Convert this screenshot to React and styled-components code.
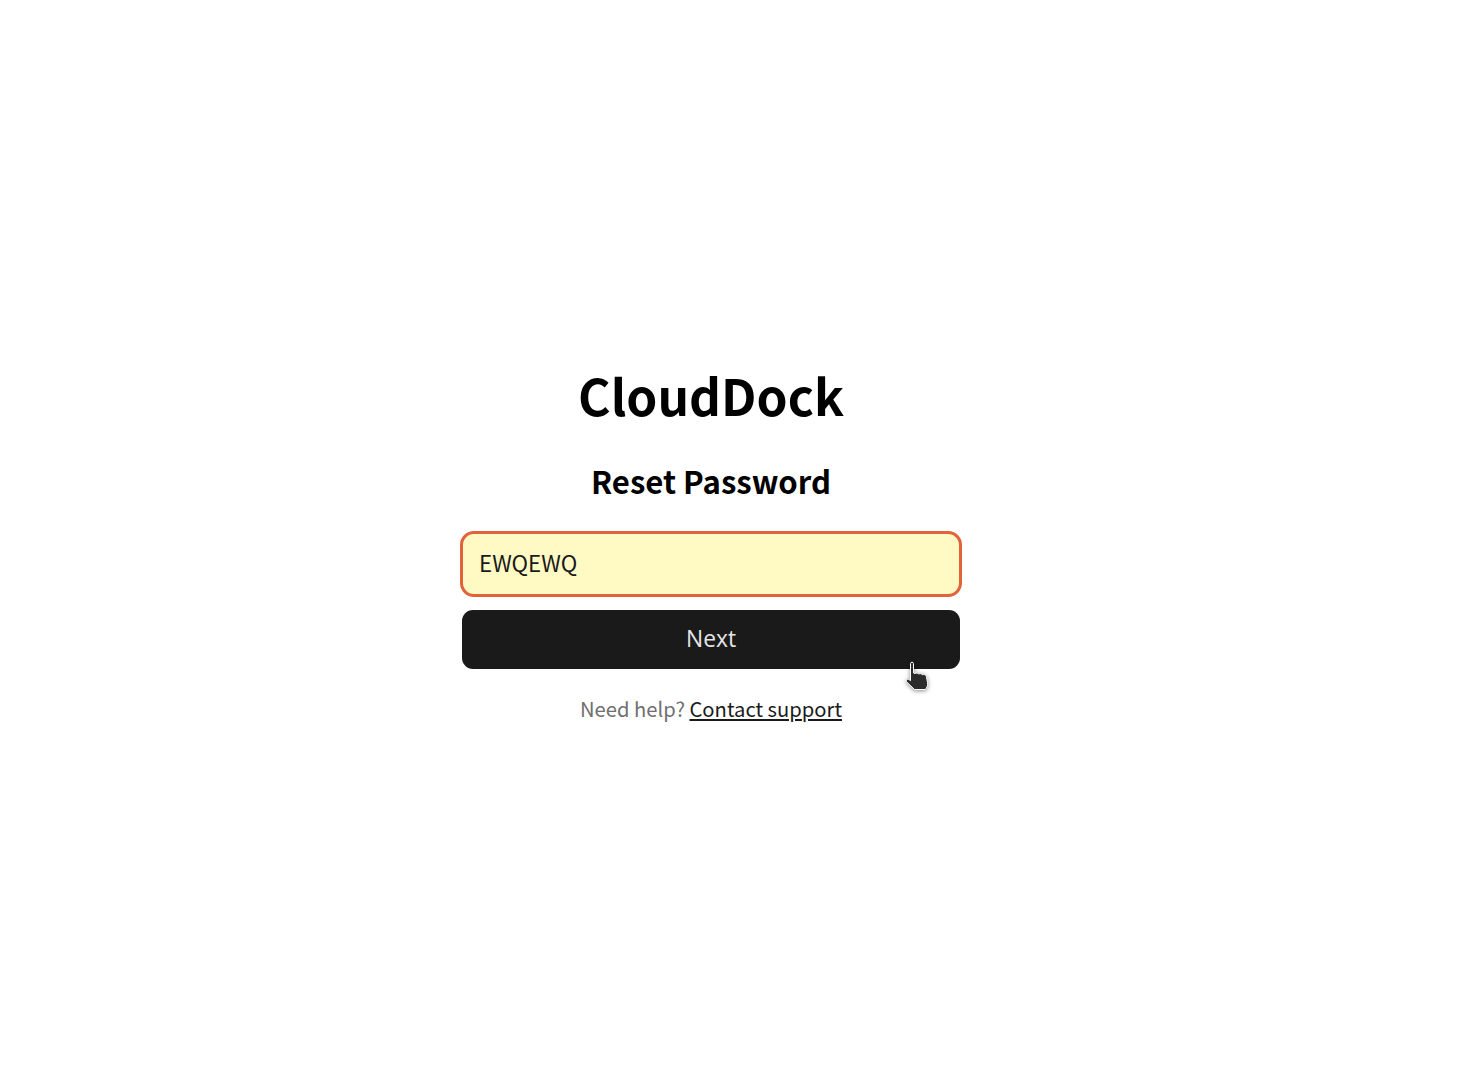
import { createGlobalStyle } from 'styled-components';
import styled from 'styled-components';

const GlobalStyle = createGlobalStyle`
  html, body {
    margin: 0;
    padding: 0;
    background: #fff;
  }
`;

const Page = styled.main`
  box-sizing: border-box;
  width: 1472px;
  height: 1080px;
  padding: 364px 50px 0 0;
  display: flex;
  flex-direction: column;
  align-items: center;
  font-family: 'Noto Sans CJK JP', sans-serif;
`;

const Form = styled.form`
  position: relative;
  width: 502px;
  display: flex;
  flex-direction: column;
  align-items: center;
`;

const Brand = styled.h1`
  margin: 0 0 37px;
  font-size: 49.7px;
  line-height: 60px;
  font-weight: 700;
  color: #000;
`;

const Title = styled.h2`
  margin: 0 0 30px;
  font-size: 31.1px;
  line-height: 40px;
  font-weight: 700;
  color: #000;
`;

const Field = styled.input`
  box-sizing: border-box;
  width: 100%;
  height: 66px;
  padding: 0 0 4px 16px;
  border: 3px solid #e2623a;
  border-radius: 14px;
  background: #fff9c4;
  color: #1a1a1a;
  font-family: inherit;
  font-size: 22.3px;
  outline: none;
`;

const NextButton = styled.button`
  width: 498px;
  height: 59px;
  margin-top: 13px;
  padding: 0 0 3px;
  border: 0;
  border-radius: 11px;
  background: #1a1a1a;
  color: #e6e6e6;
  font-family: 'Open Sans', sans-serif;
  font-size: 22.8px;
`;

const Help = styled.p`
  margin: 23px 0 0;
  font-size: 20.2px;
  line-height: 34px;
  color: #6f6f6f;
`;

const SupportLink = styled.a`
  color: #1a1a1a;
  text-decoration: underline;
`;

const Cursor = styled.svg`
  position: absolute;
  left: 445px;
  top: 297px;
  width: 28px;
  height: 32px;
  filter: drop-shadow(0 1px 2px rgba(0, 0, 0, 0.45));
`;

const HandCursor = () => (
  <Cursor viewBox="0 0 28 32">
    <path
      d="M5.500 2.500c0-1.700 3-1.700 3 0V12l1.500.5c1.200-.9 3-.6 3.800.5 1.200-.7 3-.4 3.700.8 1.400-.7 3.300 0 3.800 1.500l1.200 6.200c.5 2.800-.5 5.500-2.500 7H9.500L1.800 21c-1.300-1.500.5-3.600 2.200-2.500l1.500 1.200z"
      fill="#2b2b2b"
      stroke="#fff"
      strokeWidth="1"
    />
  </Cursor>
);

export default function App() {
  return (
    <>
      <GlobalStyle />
      <Page>
        <Form onSubmit={(e) => e.preventDefault()}>
          <Brand>CloudDock</Brand>
          <Title>Reset Password</Title>
          <Field defaultValue="EWQEWQ" />
          <NextButton>Next</NextButton>
          <Help>
            Need help? <SupportLink href="#">Contact support</SupportLink>
          </Help>
          <HandCursor />
        </Form>
      </Page>
    </>
  );
}
